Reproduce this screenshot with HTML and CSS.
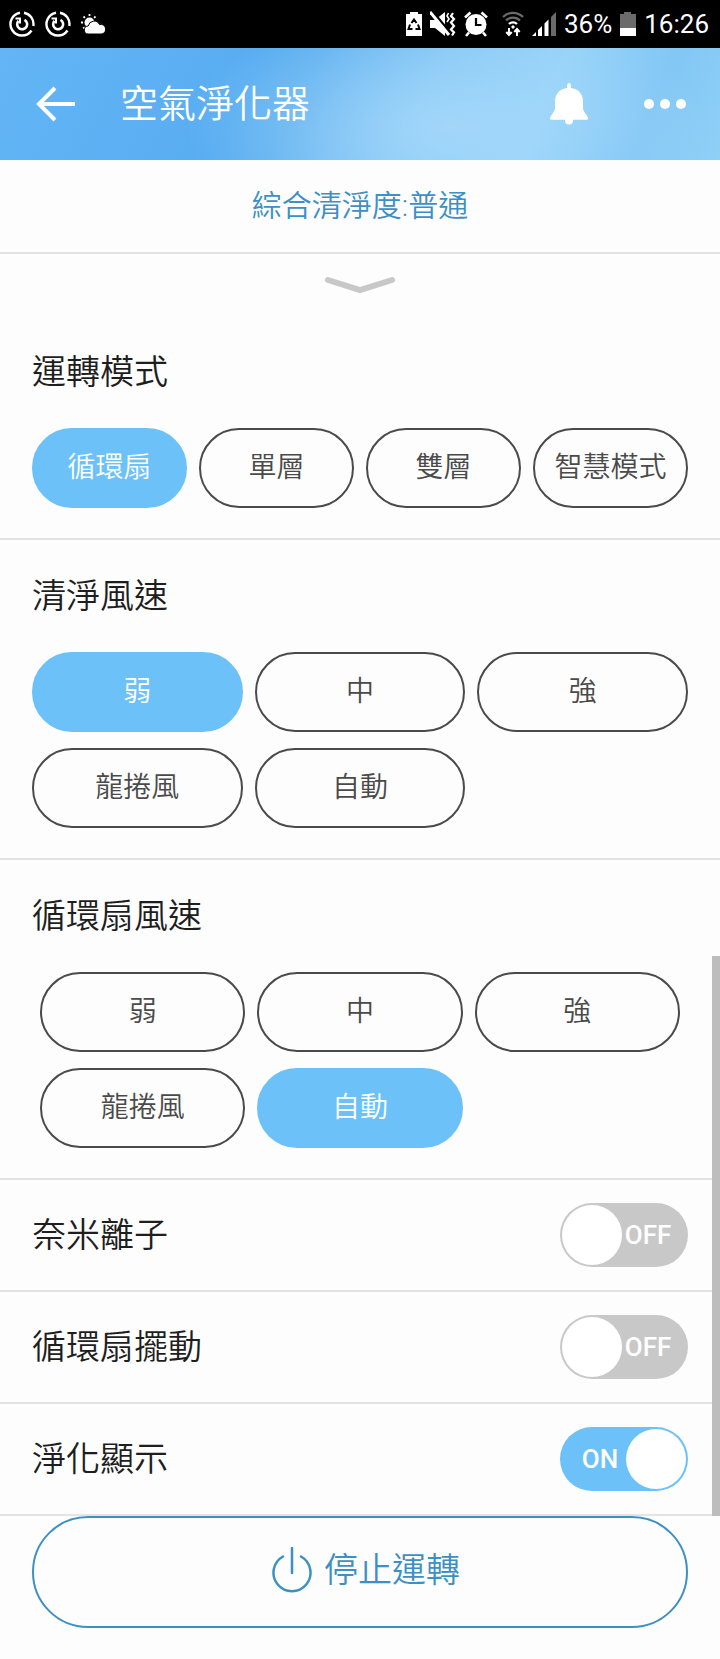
FILE: index.html
```html
<!DOCTYPE html>
<html lang="zh-Hant">
<head>
    <meta charset="UTF-8">
    <meta name="viewport" content="width=device-width, initial-scale=1.0">
    <title>空氣淨化器</title>
    <link rel="stylesheet" href="styles.css">
</head>
<body>
    <div class="status-bar">
        <div class="status-left">
            <svg width="26" height="26" viewBox="0 0 26 26" fill="none" stroke="#fff">
                <path d="M15 1.700A11.500 11.500 0 0 1 24.300 15M22.500 19.500A11.500 11.500 0 1 1 11 1.700" stroke-width="2.400"/>
                <path d="M15.500 8.800A5 5 0 1 1 9.500 9.800" stroke-width="2.600"/>
                <path d="M6.500 7.500h4.500v5" stroke-width="2"/>
            </svg>
            <svg width="26" height="26" viewBox="0 0 26 26" fill="none" stroke="#fff">
                <path d="M15 1.700A11.500 11.500 0 0 1 24.300 15M22.500 19.500A11.500 11.500 0 1 1 11 1.700" stroke-width="2.400"/>
                <path d="M15.500 8.800A5 5 0 1 1 9.500 9.800" stroke-width="2.600"/>
                <path d="M6.500 7.500h4.500v5" stroke-width="2"/>
            </svg>
            <svg width="26" height="22" viewBox="0 0 26 22">
                <circle cx="8.500" cy="9.500" r="5" fill="#fff"/>
                <path d="M8.500 1v2M2.500 3.500l1.400 1.400M0 9.500h2M2.300 15.500l1.400-1.400M14.500 3.500l-1.400 1.400" stroke="#fff" stroke-width="1.800"/>
                <path d="M7.500 21a4 4 0 0 1-.3-8A6 6 0 0 1 18.500 11.500 4.800 4.800 0 1 1 21 21z" fill="#fff" stroke="#000" stroke-width="1"/>
            </svg>
        </div>
        <div class="status-right">
            <svg width="16" height="26" viewBox="0 0 16 26">
                <path d="M0 3h4V1h8v2h4v22H0z" fill="#fff"/>
                <path d="M5.500 12L8 8.500l2.500 3.500M12 13.500l1.500 4.500h-4M6.500 18h-4L4 13.500" fill="none" stroke="#000" stroke-width="2"/>
            </svg>
            <svg width="26" height="26" viewBox="0 0 26 26">
                <path d="M0 9h5l10-8v24L5 17H0z" fill="#fff"/>
                <path d="M2 0l18 22" stroke="#000" stroke-width="3"/>
                <path d="M0 1l19 23" stroke="#fff" stroke-width="3"/>
                <path d="M18.500 2l-1.500 3 2 3-2 3" fill="none" stroke="#fff" stroke-width="1.600"/>
                <path d="M23 2l-2 3 3 3-3 3.500 3 3.500-3 3.500 3 3-2 3" fill="none" stroke="#fff" stroke-width="2.200"/>
            </svg>
            <svg width="24" height="26" viewBox="0 0 24 26">
                <circle cx="12" cy="13.500" r="10.500" fill="#fff"/>
                <path d="M1 6.500L6.500 1.500M23 6.500L17.500 1.500M5 21.500L2 25M19 21.500L22 25" stroke="#fff" stroke-width="2.600"/>
                <path d="M12 7v7h5.500" fill="none" stroke="#000" stroke-width="2.200"/>
            </svg>
            <svg class="wifi" width="22" height="26" viewBox="0 0 22 26" fill="none">
                <path d="M1 6a14 14 0 0 1 20 0M4 9.500a10 10 0 0 1 14 0" stroke="#6b6b6b" stroke-width="2.200"/>
                <path d="M7 13a5.600 5.600 0 0 1 8 0" stroke="#fff" stroke-width="2.200"/>
                <path d="M11 14l2 2-2 2-2-2z" fill="#fff"/>
                <path d="M7 17v7M4.300 21l2.700 3 2.700-3M15 25v-7M12.300 21l2.700-3 2.700 3" stroke="#fff" stroke-width="2"/>
            </svg>
            <svg width="24" height="26" viewBox="0 0 24 26">
                <path d="M0 25l4-4v4zM6 19l4-4v10H6zM12.500 12.500l4-4V25h-4z" fill="#fff"/>
                <path d="M19 6l5-5v24h-5z" fill="#6b6b6b"/>
            </svg>
            <span>36%</span>
            <svg width="16" height="26" viewBox="0 0 16 26">
                <path d="M0 3h4V1h7v2h5v14H0z" fill="#6b6b6b"/>
                <path d="M0 17h16v8H0z" fill="#fff"/>
            </svg>
            <span>16:26</span>
        </div>
    </div>

    <header class="header">
        <button type="button" class="icon-btn" aria-label="返回">
            <svg width="40" height="36" viewBox="0 0 40 36" fill="none" stroke="#fff" stroke-width="4">
                <path d="M19 2L3 18l16 16M3 18h36"/>
            </svg>
        </button>
        <h1>空氣淨化器</h1>
        <button type="button" class="icon-btn" aria-label="通知">
            <svg width="38" height="42" viewBox="0 0 38 42" fill="#fff">
                <path d="M17.200 5V1.800a1.800 1.800 0 0 1 3.600 0V5C28 5.500 33 11 33 18v7c0 4 5 7.500 5 10.500 0 .8-.4 1.200-1 1.200H1c-.6 0-1-.4-1-1.200C0 32.500 5 29 5 25v-7C5 11 10 5.500 17.200 5z"/>
                <path d="M15 36h8v1.500a4 4 0 0 1-8 0z"/>
            </svg>
        </button>
        <button type="button" class="icon-btn" aria-label="更多">
            <svg width="42" height="10" viewBox="0 0 42 10" fill="#fff">
                <circle cx="5" cy="5" r="5"/>
                <circle cx="21" cy="5" r="5"/>
                <circle cx="37" cy="5" r="5"/>
            </svg>
        </button>
    </header>

    <main class="panel">
        <p class="air-status">綜合清淨度:普通</p>
        <button type="button" class="expand-btn" aria-label="展開">
            <svg width="72" height="18" viewBox="0 0 72 18" fill="none" stroke="#c8c8c8" stroke-width="6" stroke-linecap="round">
                <path d="M4 4l32 10L68 4"/>
            </svg>
        </button>

        <section class="section">
            <h2>運轉模式</h2>
            <div class="options four">
                <button type="button" class="option active">循環扇</button>
                <button type="button" class="option">單層</button>
                <button type="button" class="option">雙層</button>
                <button type="button" class="option">智慧模式</button>
            </div>
        </section>

        <section class="section">
            <h2>清淨風速</h2>
            <div class="options">
                <button type="button" class="option active">弱</button>
                <button type="button" class="option">中</button>
                <button type="button" class="option">強</button>
                <button type="button" class="option">龍捲風</button>
                <button type="button" class="option">自動</button>
            </div>
        </section>

        <section class="section">
            <h2>循環扇風速</h2>
            <div class="options inset">
                <button type="button" class="option">弱</button>
                <button type="button" class="option">中</button>
                <button type="button" class="option">強</button>
                <button type="button" class="option">龍捲風</button>
                <button type="button" class="option active">自動</button>
            </div>
        </section>

        <label class="toggle-row" for="ion">
            <span>奈米離子</span>
            <span class="switch">
                <input type="checkbox" id="ion">
                <span class="switch-text">OFF</span>
            </span>
        </label>
        <label class="toggle-row" for="swing">
            <span>循環扇擺動</span>
            <span class="switch">
                <input type="checkbox" id="swing">
                <span class="switch-text">OFF</span>
            </span>
        </label>
        <label class="toggle-row" for="display">
            <span>淨化顯示</span>
            <span class="switch on">
                <input type="checkbox" id="display" checked>
                <span class="switch-text">ON</span>
            </span>
        </label>

        <div class="scroll-thumb"></div>
    </main>

    <footer class="footer">
        <button type="button" class="stop-btn">
            <svg width="40" height="46" viewBox="0 0 40 46" fill="none" stroke="#3d90c4" stroke-width="2.500" stroke-linecap="round">
                <path d="M20 1v25M11 9.500A18.500 18.500 0 1 0 29 9.500"/>
            </svg>
            停止運轉
        </button>
    </footer>
</body>
</html>
```
FILE: styles.css
```css
* {
    margin: 0;
    padding: 0;
    box-sizing: border-box;
}

body {
    background: #fdfdfd;
    font-family: Roboto, 'Noto Sans CJK TC', sans-serif;
    font-weight: 350;
    line-height: 48px;
    color: #1e1e1e;
}

button {
    font-family: inherit;
    font-weight: inherit;
    line-height: inherit;
    background: none;
    border: none;
    cursor: pointer;
}

svg {
    display: block;
    flex-shrink: 0;
}

/* phone status bar */
.status-bar {
    display: flex;
    justify-content: space-between;
    align-items: center;
    height: 48px;
    padding: 0 11px 0 9px;
    background: #000;
    color: #fff;
    font-size: 26px;
    font-weight: 400;
}

.status-left {
    display: flex;
    align-items: center;
    gap: 10px;
}

.status-right {
    display: flex;
    align-items: center;
    gap: 8px;
}

.wifi {
    margin-left: 6px;
}

/* header */
.header {
    display: flex;
    align-items: center;
    height: 112px;
    padding: 0 34px 0 36px;
    background:
        radial-gradient(ellipse 260px 120px at 62% 70%, rgba(172, 220, 251, 0.7), rgba(172, 220, 251, 0)),
        linear-gradient(115deg, #63b5f5 0%, #58adf1 34%, #5fb0f0 42%, #84c6f5 58%, #96d2f8 74%, #82c7f5 88%, #8fd0f6 100%);
    color: #fff;
}

.header h1 {
    flex: 1;
    margin-left: 44px;
    font-size: 38px;
    font-weight: 350;
}

.icon-btn + .icon-btn {
    margin-left: 56px;
}

/* control panel */
.panel {
    position: relative;
}

.air-status {
    padding: 22px 0;
    border-bottom: 2px solid #e4e4e4;
    font-size: 30px;
    text-align: center;
    color: #3d90c4;
}

.expand-btn {
    display: flex;
    justify-content: center;
    width: 100%;
    padding: 22px 0;
}

.section {
    padding: 32px 32px 30px;
    border-bottom: 2px solid #e4e4e4;
}

.section h2 {
    margin-bottom: 32px;
    font-size: 34px;
    font-weight: 350;
}

.options {
    display: grid;
    grid-template-columns: repeat(3, 1fr);
    gap: 16px 12px;
}

.options.four {
    grid-template-columns: repeat(4, 1fr);
}

.options.inset {
    padding: 0 8px;
}

.option {
    height: 80px;
    border: 2px solid #4a4a4a;
    border-radius: 40px;
    font-size: 28px;
    color: #4a4a4a;
    white-space: nowrap;
}

.option.active {
    background: #6cc1f8;
    border-color: #6cc1f8;
    color: #fff;
}

/* on / off rows */
.toggle-row {
    display: flex;
    justify-content: space-between;
    align-items: center;
    height: 112px;
    padding: 0 32px;
    border-bottom: 2px solid #e4e4e4;
    font-size: 34px;
    cursor: pointer;
}

.switch {
    display: flex;
    align-items: center;
    width: 128px;
    height: 64px;
    padding: 2px;
    border-radius: 32px;
    background: #c8c8c8;
}

.switch input {
    appearance: none;
    width: 60px;
    height: 60px;
    border-radius: 50%;
    background: #fff;
    cursor: pointer;
}

.switch-text {
    flex: 1;
    padding-right: 12px;
    font-size: 26px;
    font-weight: 500;
    text-align: center;
    color: #fff;
}

.switch.on {
    flex-direction: row-reverse;
    background: #6cc1f8;
}

.switch.on .switch-text {
    padding: 0 0 0 12px;
}

.scroll-thumb {
    position: absolute;
    right: 0;
    bottom: 0;
    width: 8px;
    height: 560px;
    background: #bdbdbd;
}

/* power button */
.footer {
    padding: 0 32px 31px;
}

.stop-btn {
    display: flex;
    justify-content: center;
    align-items: center;
    gap: 12px;
    width: 100%;
    height: 112px;
    padding: 0 0 4px 12px;
    border: 2px solid #3d90c4;
    border-radius: 56px;
    font-size: 34px;
    color: #3d90c4;
}
```
